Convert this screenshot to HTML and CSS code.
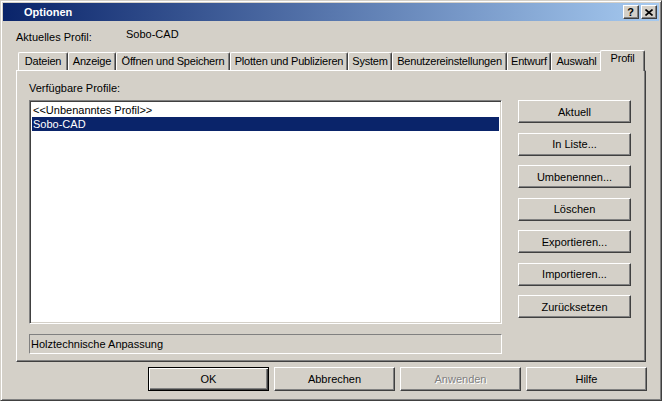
FILE: index.html
```html
<!DOCTYPE html>
<html lang="de">
<head>
    <meta charset="UTF-8">
    <title>Optionen</title>
    <link rel="stylesheet" href="styles.css">
</head>
<body>
    <div class="window">
        <div class="titlebar">
            <span class="title">Optionen</span>
            <div class="title-buttons">
                <div class="title-btn">?</div>
                <div class="title-btn">
                    <svg width="8" height="7" viewBox="0 0 8 7"><path d="M0.5 0.5 L7.5 6.5 M7.5 0.5 L0.5 6.5" stroke="#000" stroke-width="1.6" fill="none"/></svg>
                </div>
            </div>
        </div>

        <div class="profile-row">
            <span class="profile-label">Aktuelles Profil:</span>
            <span class="profile-value">Sobo-CAD</span>
        </div>

        <div class="tabs">
            <div class="tab">Dateien</div>
            <div class="tab">Anzeige</div>
            <div class="tab">Öffnen und Speichern</div>
            <div class="tab">Plotten und Publizieren</div>
            <div class="tab">System</div>
            <div class="tab">Benutzereinstellungen</div>
            <div class="tab">Entwurf</div>
            <div class="tab">Auswahl</div>
            <div class="tab active">Profil</div>
        </div>

        <div class="panel">
            <div class="left-col">
                <div class="list-label">Verfügbare Profile:</div>
                <div class="listbox">
                    <div class="list-item">&lt;&lt;Unbenanntes Profil&gt;&gt;</div>
                    <div class="list-item selected">Sobo-CAD</div>
                </div>
                <div class="status-box">Holztechnische Anpassung</div>
            </div>
            <div class="right-col">
                <div class="btn">Aktuell</div>
                <div class="btn">In Liste...</div>
                <div class="btn">Umbenennen...</div>
                <div class="btn">Löschen</div>
                <div class="btn">Exportieren...</div>
                <div class="btn">Importieren...</div>
                <div class="btn">Zurücksetzen</div>
            </div>
        </div>

        <div class="footer">
            <div class="btn wide default">OK</div>
            <div class="btn wide">Abbrechen</div>
            <div class="btn wide disabled">Anwenden</div>
            <div class="btn wide">Hilfe</div>
        </div>
    </div>
</body>
</html>
```

FILE: styles.css
```css
body {
    margin: 0;
    padding: 0;
    background-color: #d4d0c8;
    font-family: 'Liberation Sans', Arial, sans-serif;
    font-size: 11px;
    color: #000;
}
.window {
    width: 662px;
    height: 401px;
    box-sizing: border-box;
    background-color: #d4d0c8;
    border: 1px solid;
    border-color: #d4d0c8 #404040 #404040 #d4d0c8;
    box-shadow: inset 1px 1px #fff, inset -1px -1px #808080;
    padding: 2px;
}
.titlebar {
    height: 18px;
    display: flex;
    align-items: center;
    justify-content: space-between;
    padding-left: 21px;
    padding-right: 2px;
    background: linear-gradient(to right, #0a246a, #a6caf0);
}
.title {
    color: #fff;
    font-weight: bold;
    font-size: 11px;
}
.title-buttons {
    display: flex;
    gap: 2px;
}
.title-btn {
    width: 16px;
    height: 14px;
    box-sizing: border-box;
    background-color: #d4d0c8;
    border: 1px solid;
    border-color: #fff #404040 #404040 #fff;
    box-shadow: inset -1px -1px #808080;
    display: flex;
    align-items: center;
    justify-content: center;
    font-weight: bold;
    font-size: 11px;
    line-height: 12px;
    padding-right: 1px;
}
.profile-row {
    height: 29px;
    display: flex;
    padding-left: 13px;
}
.profile-label {
    width: 110px;
    margin-top: 10px;
}
.profile-value {
    margin-top: 7px;
}
.tabs {
    display: flex;
    align-items: flex-start;
    height: 21px;
    margin-bottom: -1px;
    padding-left: 15px;
    position: relative;
    z-index: 1;
}
.tab {
    flex: none;
    height: 18px;
    margin-top: 2px;
    box-sizing: border-box;
    line-height: 16px;
    text-align: center;
    white-space: nowrap;
    letter-spacing: -0.2px;
    border-top: 1px solid #fff;
    border-left: 1px solid #fff;
    border-right: 1px solid #404040;
    box-shadow: inset -1px 0 #808080;
    border-radius: 2px 2px 0 0;
    background-color: #d4d0c8;
}
/* tab widths as in the original dialog */
.tab:nth-child(1) { width: 50px; }
.tab:nth-child(2) { width: 48px; }
.tab:nth-child(3) { width: 114px; }
.tab:nth-child(4) { width: 118px; }
.tab:nth-child(5) { width: 44px; }
.tab:nth-child(6) { width: 115px; }
.tab:nth-child(7) { width: 44px; }
.tab:nth-child(8) { width: 51px; }
.tab.active {
    width: 45px;
    height: 21px;
    margin: 0 0 0 -2px;
    line-height: 15px;
}
.panel {
    margin-left: 13px;
    width: 630px;
    height: 292px;
    box-sizing: border-box;
    border: 1px solid;
    border-color: #fff #404040 #404040 #fff;
    box-shadow: inset -1px -1px #808080;
    padding: 11px 0 0 12px;
    display: flex;
    gap: 16px;
}
.left-col {
    width: 473px;
}
.list-label {
    height: 13px;
    line-height: 13px;
    margin-bottom: 5px;
}
.listbox {
    height: 224px;
    box-sizing: border-box;
    background-color: #fff;
    border: 1px solid;
    border-color: #808080 #fff #fff #808080;
    box-shadow: inset 1px 1px #404040, inset -1px -1px #d4d0c8;
    padding: 2px 2px 0 2px;
}
.list-item {
    height: 14px;
    line-height: 14px;
    padding-left: 1px;
    white-space: nowrap;
}
.list-item.selected {
    background-color: #0a246a;
    color: #fff;
}
.status-box {
    margin-top: 10px;
    height: 20px;
    box-sizing: border-box;
    border: 1px solid;
    border-color: #808080 #fff #fff #808080;
    line-height: 18px;
    padding-left: 1px;
}
.right-col {
    width: 113px;
    padding-top: 18px;
    display: flex;
    flex-direction: column;
    gap: 9.5px;
}
.btn {
    height: 23px;
    box-sizing: border-box;
    background-color: #d4d0c8;
    border: 1px solid;
    border-color: #fff #404040 #404040 #fff;
    box-shadow: inset -1px -1px #808080;
    display: flex;
    align-items: center;
    justify-content: center;
    white-space: nowrap;
}
.footer {
    display: flex;
    justify-content: flex-end;
    gap: 5px;
    margin-top: 5px;
    padding-right: 12px;
}
.btn.wide {
    width: 121px;
    height: 24px;
}
.btn.default {
    border-color: #000;
    box-shadow: inset 1px 1px #fff, inset -1px -1px #404040, inset -2px -2px #808080;
}
.btn.disabled {
    color: #808080;
    text-shadow: 1px 1px #fff;
}
```
